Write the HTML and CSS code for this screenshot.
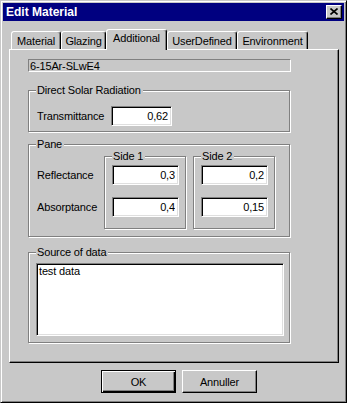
FILE: index.html
```html
<!DOCTYPE html>
<html>
<head>
    <meta charset='utf-8'>
    <title>Edit Material</title>
    <link rel="stylesheet" href="styles.css">
</head>
<body>
<div class="window">
    <div class="titlebar">
        <span class="title">Edit Material</span>
        <span class="close">
            <svg width="8" height="7" viewBox="0 0 8 7">
                <path d="M0.5 0.5 L7.5 6.5 M7.5 0.5 L0.5 6.5" stroke="#000" stroke-width="1.6" fill="none"/>
            </svg>
        </span>
    </div>

    <div class="tabs">
        <div class="tab tab-material">Material</div>
        <div class="tab tab-glazing">Glazing</div>
        <div class="tab tab-additional active">Additional</div>
        <div class="tab tab-user">UserDefined</div>
        <div class="tab tab-env">Environment</div>
    </div>

    <div class="panel">
        <div class="name-field">6-15Ar-SLwE4</div>

        <div class="group group-direct">
            <span class="legend">Direct Solar Radiation</span>
            <div class="row">
                <label class="row-label">Transmittance</label>
                <input class="field field-trans" type="text" value="0,62">
            </div>
        </div>

        <div class="group group-pane">
            <span class="legend">Pane</span>
            <div class="pane-body">
                <div class="pane-labels">
                    <span>Reflectance</span>
                    <span>Absorptance</span>
                </div>
                <div class="group side">
                    <span class="legend">Side 1</span>
                    <input class="field" type="text" value="0,3">
                    <input class="field" type="text" value="0,4">
                </div>
                <div class="group side side-2">
                    <span class="legend">Side 2</span>
                    <input class="field" type="text" value="0,2">
                    <input class="field" type="text" value="0,15">
                </div>
            </div>
        </div>

        <div class="group group-source">
            <span class="legend">Source of data</span>
            <textarea class="source">test data</textarea>
        </div>
    </div>

    <div class="buttons">
        <button class="btn default">OK</button>
        <button class="btn">Annuller</button>
    </div>
</div>
</body>
</html>
```

FILE: styles.css
```css
* {
    font-family: "Liberation Sans", Arial, Helvetica, sans-serif;
    font-size: 11px;
    letter-spacing: -0.15px;
    box-sizing: border-box;
}

html, body {
    margin: 0;
    padding: 0;
    background: #c8c8c8;
}

.window {
    width: 347px;
    height: 403px;
    background: #c8c8c8;
    border: 1px solid;
    border-color: #c8c8c8 #000 #000 #c8c8c8;
    box-shadow: inset 1px 1px 0 #fff, inset -1px -1px 0 #808080;
    padding: 2px;
}

.titlebar {
    height: 18px;
    background: #000080;
    display: flex;
    align-items: center;
    justify-content: space-between;
    padding: 0 2px 0 3px;
}

.title {
    color: #fff;
    font-weight: bold;
    font-size: 12px;
    letter-spacing: 0;
    line-height: 18px;
}

.close {
    width: 16px;
    height: 14px;
    background: #c8c8c8;
    border: 1px solid;
    border-color: #fff #000 #000 #fff;
    box-shadow: inset -1px -1px 0 #808080;
    display: flex;
    padding: 2px 0 0 3px;
}

/* tabs */
.tabs {
    display: flex;
    align-items: flex-end;
    height: 20px;
    margin-top: 8px;
    padding-left: 8px;
}

.tab {
    height: 18px;
    border: 1px solid;
    border-bottom: none;
    border-color: #fff #000 transparent #fff;
    border-radius: 3px 3px 0 0;
    box-shadow: inset -1px 0 0 #808080;
    background: #c8c8c8;
    text-align: center;
    line-height: 16px;
    padding-top: 1px;
    color: #000;
}

.tab.active {
    height: 21px;
    margin-bottom: -1px;
    padding-top: 0;
    position: relative;
    z-index: 1;
}

.tab-material { width: 50px; }
.tab-glazing { width: 45px; }
.tab-additional { width: 61px; }
.tab-user { width: 70px; }
.tab-env { width: 71px; }

.panel {
    width: 330px;
    height: 314px;
    margin-left: 6px;
    border: 1px solid;
    border-color: #fff #000 #000 #fff;
    box-shadow: inset -1px -1px 0 #808080;
    padding: 9px 0 0 18px;
}

.name-field {
    width: 263px;
    height: 13px;
    border: 1px solid;
    border-color: #808080 #fff #fff #808080;
    padding: 1px 0 0 1px;
    line-height: 11px;
}

/* etched group boxes */
.group {
    position: relative;
    border: 1px solid #808080;
    box-shadow: 1px 1px 0 #fff, inset 1px 1px 0 #fff;
}

.legend {
    position: absolute;
    top: -7px;
    left: 7px;
    padding: 0 2px 0 1px;
    line-height: 13px;
    background: #c8c8c8;
    white-space: nowrap;
}

.group-direct {
    width: 262px;
    height: 42px;
    margin-top: 18px;
    padding: 15px 0 0 8px;
}

.row {
    display: flex;
    align-items: center;
}

.row-label {
    width: 74px;
}

.field {
    width: 67px;
    height: 20px;
    border: 1px solid;
    border-color: #808080 #fff #fff #808080;
    box-shadow: inset 1px 1px 0 #000, inset -1px -1px 0 #dfdfdf;
    background: #fff;
    text-align: right;
    padding: 0 3px 0 2px;
    margin: 0;
    outline: none;
    color: #000;
}

.field-trans {
    width: 61px;
}

.group-pane {
    width: 262px;
    height: 93px;
    margin-top: 12px;
    padding: 11px 0 0 8px;
}

.pane-body {
    display: flex;
}

.pane-labels {
    width: 67px;
    display: flex;
    flex-direction: column;
    gap: 12px;
    padding-top: 9px;
}

.pane-labels span {
    line-height: 20px;
}

.side {
    width: 82px;
    height: 73px;
    padding: 8px 6px 0 0;
    display: flex;
    flex-direction: column;
    align-items: flex-end;
    gap: 12px;
}

.side-2 {
    margin-left: 7px;
}

.group-source {
    width: 262px;
    height: 91px;
    margin-top: 15px;
    padding: 10px 0 0 7px;
}

.source {
    display: block;
    width: 248px;
    height: 73px;
    margin: 0;
    border: 1px solid;
    border-color: #808080 #fff #fff #808080;
    box-shadow: inset 1px 1px 0 #000, inset -1px -1px 0 #dfdfdf;
    background: #fff;
    padding: 1px 2px;
    line-height: 13px;
    resize: none;
    overflow: hidden;
    outline: none;
    color: #000;
}

.buttons {
    display: flex;
    gap: 6px;
    margin-top: 7px;
    padding-left: 98px;
}

.btn {
    width: 75px;
    height: 23px;
    background: #c8c8c8;
    border: 1px solid;
    border-color: #fff #000 #000 #fff;
    box-shadow: inset -1px -1px 0 #808080;
    padding: 0;
    color: #000;
}

.btn.default {
    border-color: #000;
    box-shadow: inset 1px 1px 0 #fff, inset -1px -1px 0 #000, inset -2px -2px 0 #808080;
}
```
